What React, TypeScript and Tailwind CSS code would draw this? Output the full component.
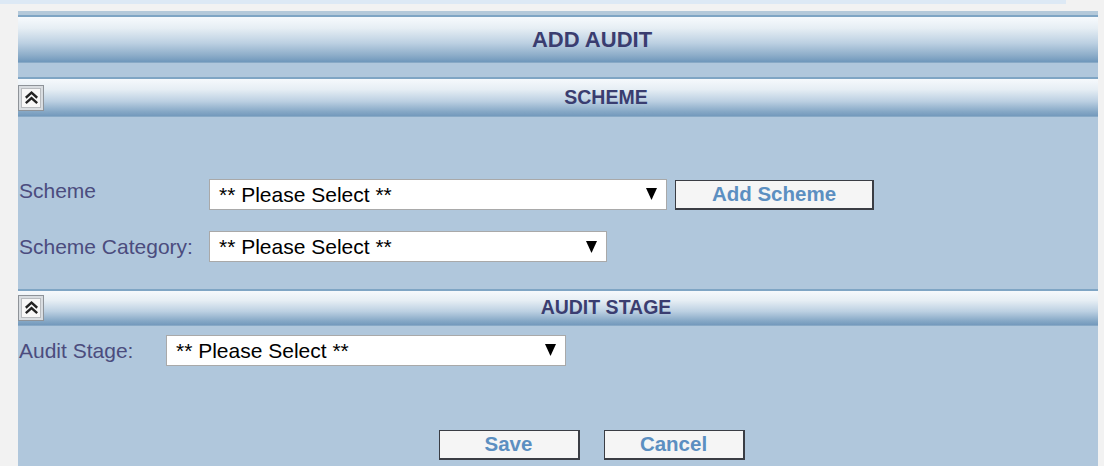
import React from "react";

const font = { fontFamily: '"Liberation Sans", Arial, sans-serif' };

const CollapseIcon = () => (
  <div className="w-[26px] h-[26px] bg-[#d9dde1] border border-[#8e9399] flex items-center justify-center">
    <div className="w-[20px] h-[20px] bg-[#f7f7f7] border border-[#b9bcc0] flex items-center justify-center">
      <svg width="15" height="15" viewBox="0 0 14 14" fill="none" stroke="#222" strokeWidth="2.2" strokeLinecap="square">
        <path d="M2.5 6.5 L7 2.5 L11.5 6.5" />
        <path d="M2.5 11.5 L7 7.5 L11.5 11.5" />
      </svg>
    </div>
  </div>
);

const SectionHeader = ({ title, height }: { title: string; height: string }) => (
  <div
    className={`flex items-center border-t-2 border-t-[#7fa5c4] border-b border-b-[#88a9c6] bg-[linear-gradient(to_bottom,#f6f9fc_0%,#e6eef4_28%,#bcd0e2_60%,#86a8c6_88%,#7399bc_100%)] ${height}`}
  >
    <CollapseIcon />
    <div className="flex-1 pl-[70px] text-center text-[19.5px] font-bold text-[#3a3d70]">{title}</div>
  </div>
);

const FakeSelect = ({ width }: { width: string }) => (
  <div className={`${width} h-[31px] bg-white border border-[#a9a9a9] flex items-center justify-between pl-[9px] pr-[9px]`}>
    <span className="text-[21px] text-black leading-none">** Please Select **</span>
    <svg width="11" height="12" viewBox="0 0 11 12">
      <polygon points="0,0 11,0 5.5,12" fill="#000" />
    </svg>
  </div>
);

const Button = ({ label, width }: { label: string; width: string }) => (
  <button
    className={`${width} h-[30px] bg-[#f5f5f5] border border-[#3a3d44] border-r-2 border-b-2 text-[20.5px] font-bold text-[#5c8fc1] leading-none`}
    style={font}
  >
    {label}
  </button>
);

export default function App() {
  return (
    <div className="w-[1104px] h-[466px] overflow-hidden bg-[#f2f2f2]" style={font}>
      <div className="w-[1066px] h-[4px] bg-[#dde9f5]" />
      <div className="ml-[18px] mt-[7px] w-[1080px] h-[460px] bg-[#b0c7dc]">
        <div className="h-[4px] bg-[#b4c9da]" />
        <div className="h-[48px] flex items-center justify-center pl-[68px] border-t-2 border-t-[#7fa5c4] border-b border-b-[#88a9c6] bg-[linear-gradient(to_bottom,#f7fafd_0%,#e6eef4_25%,#bcd0e2_58%,#8dadc9_85%,#6f97bb_100%)] text-[22px] font-bold text-[#3a3d70]">
          ADD AUDIT
        </div>
        <div className="h-[14px]" />
        <SectionHeader title="SCHEME" height="h-[40px]" />

        <div className="pt-[61px] flex flex-col gap-[21px]">
          <div className="flex items-center">
            <div className="w-[191px] pl-[1px] text-[21px] text-[#4b4c7e] -mt-[6px]">Scheme</div>
            <FakeSelect width="w-[458px]" />
            <div className="ml-[8px] mt-[2px]">
              <Button label="Add Scheme" width="w-[199px]" />
            </div>
          </div>
          <div className="flex items-center">
            <div className="w-[191px] pl-[1px] text-[21px] text-[#4b4c7e]">Scheme Category:</div>
            <FakeSelect width="w-[398px]" />
          </div>
        </div>

        <div className="mt-[26px]">
          <SectionHeader title="AUDIT STAGE" height="h-[37px]" />
        </div>

        <div className="mt-[9px] flex items-center">
          <div className="w-[148px] pl-[1px] text-[21px] text-[#4b4c7e]">Audit Stage:</div>
          <FakeSelect width="w-[400px]" />
        </div>

        <div className="mt-[64px] flex justify-center gap-[24px] pl-[67px]">
          <Button label="Save" width="w-[141px]" />
          <Button label="Cancel" width="w-[141px]" />
        </div>
      </div>
    </div>
  );
}
